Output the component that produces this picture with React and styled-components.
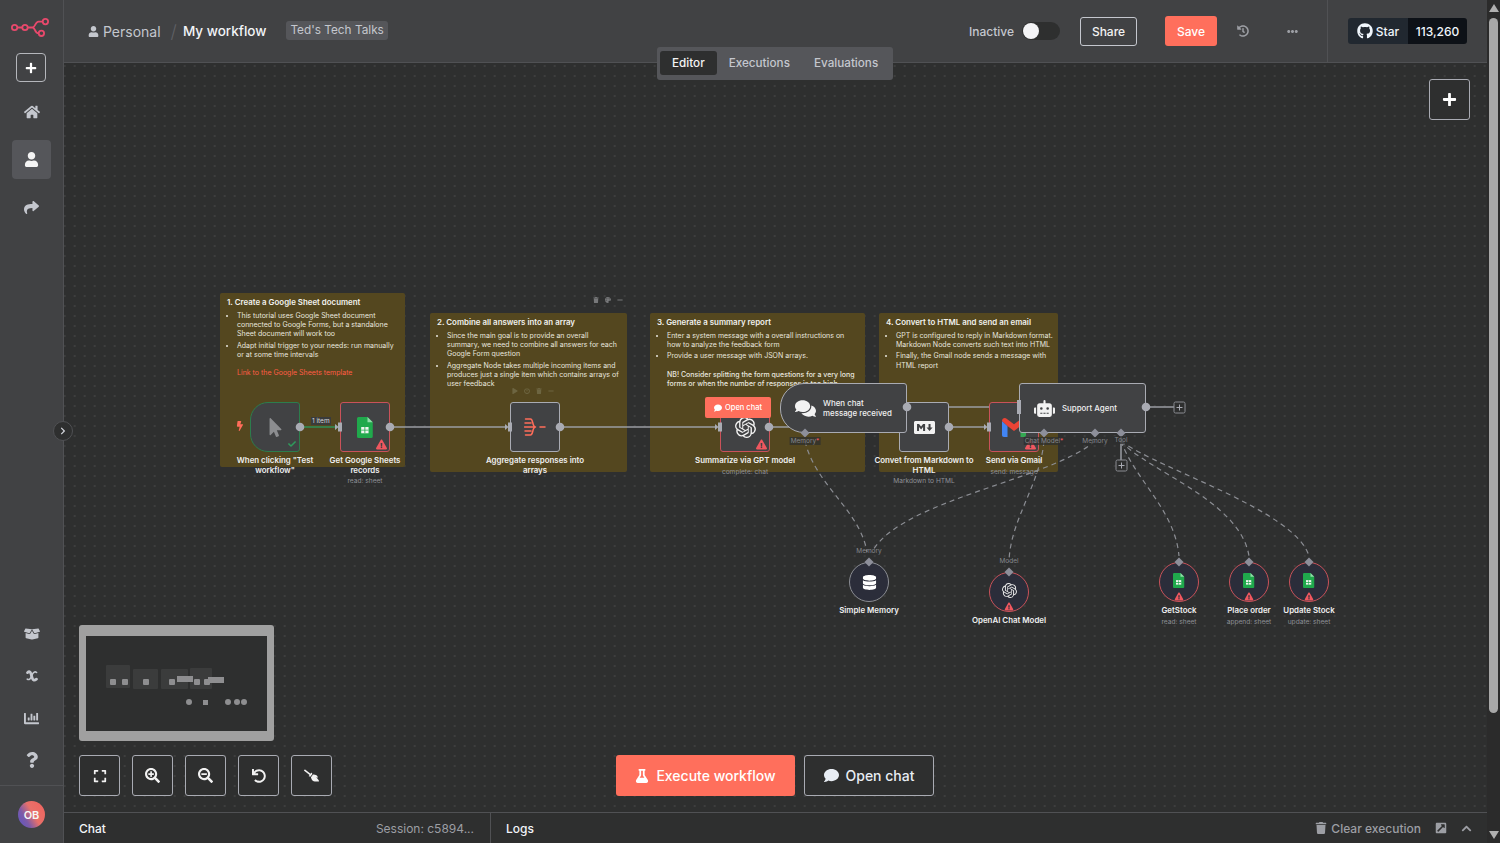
import styled, { createGlobalStyle } from "styled-components";
import {
  FaHome,
  FaUser,
  FaShare,
  FaBoxOpen,
  FaChartBar,
  FaQuestion,
  FaPlus,
  FaGithub,
  FaHistory,
  FaEllipsisH,
  FaExpand,
  FaSearchPlus,
  FaSearchMinus,
  FaUndo,
  FaBroom,
  FaFlask,
  FaComment,
  FaComments,
  FaTrash,
  FaExternalLinkSquareAlt,
  FaChevronUp,
  FaChevronRight,
  FaRobot,
  FaDatabase,
  FaMousePointer,
  FaBolt,
  FaCheck,
  FaExclamationTriangle,
  FaMarkdown,
  FaPalette,
  FaPlay,
  FaPowerOff,
  FaMinus,
} from "react-icons/fa";
import { SiOpenai } from "react-icons/si";

const GlobalStyle = createGlobalStyle`
  html, body {
    margin: 0;
    padding: 0;
    height: 100%;
    overflow: hidden;
    background: #2e2f2f;
    font-family: Inter, "Noto Sans", sans-serif;
  }
  * { box-sizing: border-box; }
`;

const Logo = () => (
  <svg width="40" height="20" viewBox="0 0 40 20" fill="none" stroke="#e8496c" strokeWidth="1.8">
    <circle cx="4.6" cy="10.5" r="2.7" />
    <circle cx="15" cy="10.5" r="2.7" />
    <circle cx="35.4" cy="4.6" r="2.7" />
    <circle cx="31.4" cy="16.3" r="2.7" />
    <path d="M7.3 10.5h5M17.7 10.5h4.8c3 0 2.6-5.9 6-5.9h4.2M22.5 10.5c3 0 1.7 5.8 6.2 5.8" />
  </svg>
);

const VariableIcon = () => (
  <svg width="12" height="14" viewBox="0 0 14 15" fill="none" stroke="currentColor" strokeLinecap="round">
    <path d="M1.8 3.6C3.600 1.600 5 2.200 5.800 5l1.500 5c.8 2.600 2.500 3 4.900 1.200" strokeWidth="3.2" />
    <path d="M12.400 3.400c-1.600-1.300-3.200-.8-4.600 1.400L5.600 9.400c-1.200 2.300-2.600 2.800-4.200 1.800" strokeWidth="1.800" />
  </svg>
);

const SheetIcon = ({ size = 21 }) => (
  <svg width={size * 0.75} height={size} viewBox="0 0 15 20">
    <path d="M1.5 0H10l5 5v13.5a1.500 1.500 0 0 1-1.500 1.500h-12A1.500 1.500 0 0 1 0 18.500v-17A1.500 1.500 0 0 1 1.500 0z" fill="#20a94c" />
    <path d="M10 0l5 5h-5z" fill="#8fdca8" />
    <path d="M4 9.500h7v6H4z" fill="#eef5ef" />
    <path d="M7.100 9.500h.8v6h-.8zM4 12.100h7v.8H4z" fill="#20a94c" />
  </svg>
);

const GmailIcon = () => (
  <svg width="24" height="19" viewBox="0 0 24 19">
    <path d="M0 3v14c0 1 .7 2 2 2h3.500V8z" fill="#4285f4" />
    <path d="M0 3c0-2.500 2.700-3.700 4.600-2.300L12 6.300l7.400-5.600C21.300-.7 24 .5 24 3l-5.500 5L12 13 5.500 8 0 3z" fill="#ea4335" />
    <path d="M18.500 19V8L24 3v14c0 1-.7 2-2 2z" fill="#34a853" />
  </svg>
);

const AggregateIcon = () => (
  <svg width="22" height="20" viewBox="0 0 22 20" fill="none" stroke="#ff6d5a" strokeWidth="1.5" strokeLinecap="round">
    <path d="M1.500 2h5c3 0 1.500 8 5 8M1 6h6M0.500 10h11M1 14h6M1.500 18h5c3 0 1.500-8 5-8M16 10h5" />
  </svg>
);

const Warning = () => (
  <WarnMark>
    <FaExclamationTriangle />
  </WarnMark>
);

const edges = [
  "M390 427H506",
  "M560 427H716",
  "M769 427H790",
  "M907 407H1019",
  "M949 427H985",
  "M1146 407H1174",
  "M1121 433V460",
];

const dashed = [
  "M805 441C815 485 860 510 867 552",
  "M1095 441C1050 480 900 500 872 552",
  "M1044 441C1040 485 1010 520 1009 562",
  "M1121 441C1135 480 1175 510 1179 556",
  "M1121 441C1145 470 1240 500 1249 556",
  "M1121 441C1160 470 1295 510 1309 556",
];

const inputs = [
  [340, 427],
  [510, 427],
  [720, 427],
  [989, 427],
];

const outputs = [
  [300, 427],
  [390, 427],
  [560, 427],
  [769, 427],
  [907, 407],
  [949, 427],
  [1146, 407],
];

const diamonds = [
  [805, 433],
  [1044, 433],
  [1095, 433],
  [1121, 433],
  [869, 562],
  [1009, 572],
  [1179, 562],
  [1249, 562],
  [1309, 562],
];

const circles = [
  { x: 869, y: 582, title: "Simple Memory", icon: <FaDatabase size={15} color="#fff" /> },
  { x: 1009, y: 592, title: "OpenAI Chat Model", icon: <SiOpenai size={15} color="#e8e8e8" />, warn: true },
  { x: 1179, y: 582, title: "GetStock", sub: "read: sheet", icon: <SheetIcon size={15} />, warn: true },
  { x: 1249, y: 582, title: "Place order", sub: "append: sheet", icon: <SheetIcon size={15} />, warn: true },
  { x: 1309, y: 582, title: "Update Stock", sub: "update: sheet", icon: <SheetIcon size={15} />, warn: true },
];

export default function App() {
  return (
    <>
      <GlobalStyle />
      <Page>
        <Sidebar>
          <SideGroup>
            <LogoSlot>
              <Logo />
            </LogoSlot>
            <AddButton>
              <FaPlus size={12} />
            </AddButton>
            <NavList>
              <NavItem>
                <FaHome size={16} />
              </NavItem>
              <NavItem $active>
                <FaUser size={15} />
              </NavItem>
              <NavItem>
                <FaShare size={15} />
              </NavItem>
            </NavList>
          </SideGroup>
          <SideGroup>
            <BottomNav>
              <SmallNav>
                <FaBoxOpen size={16} />
              </SmallNav>
              <SmallNav>
                <VariableIcon />
              </SmallNav>
              <SmallNav>
                <FaChartBar size={15} />
              </SmallNav>
              <SmallNav>
                <FaQuestion size={16} />
              </SmallNav>
            </BottomNav>
            <AvatarRow>
              <Avatar>OB</Avatar>
            </AvatarRow>
          </SideGroup>
        </Sidebar>

        <Main>
          <Header>
            <Crumbs>
              <FaUser size={11} />
              <CrumbProject>Personal</CrumbProject>
              <CrumbSlash>/</CrumbSlash>
              <CrumbName>My workflow</CrumbName>
              <Tag>Ted's Tech Talks</Tag>
            </Crumbs>
            <HeaderRight>
              <ActiveLabel>Inactive</ActiveLabel>
              <Toggle>
                <ToggleKnob />
              </Toggle>
              <ShareButton>Share</ShareButton>
              <SaveButton>Save</SaveButton>
              <HeadIcon $w={32}>
                <FaHistory size={12} />
              </HeadIcon>
              <HeadIcon $w={78} $pad={29}>
                <FaEllipsisH size={11} />
              </HeadIcon>
            </HeaderRight>
            <GithubBox>
              <StarPart>
                <FaGithub size={16} />
                Star
              </StarPart>
              <CountPart>113,260</CountPart>
            </GithubBox>
          </Header>

          <Tabs>
            <TabItem $active>Editor</TabItem>
            <TabItem>Executions</TabItem>
            <TabItem>Evaluations</TabItem>
          </Tabs>

          <CollapseButton>
            <FaChevronRight size={8} />
          </CollapseButton>

          <Canvas>
            <Layer>
              <Note $x={220} $y={293} $w={185} $h={174}>
                <NoteTitle>1. Create a Google Sheet document</NoteTitle>
                <NoteList>
                  <li>This tutorial uses Google Sheet document connected to Google Forms, but a standalone Sheet document will work too</li>
                  <li>Adapt initial trigger to your needs: run manually or at some time intervals</li>
                </NoteList>
                <NoteLink>Link to the Google Sheets template</NoteLink>
              </Note>
              <Note $x={430} $y={313} $w={197} $h={159}>
                <NoteTitle>2. Combine all answers into an array</NoteTitle>
                <NoteList>
                  <li>Since the main goal is to provide an overall summary, we need to combine all answers for each Google Form question</li>
                  <li>Aggregate Node takes multiple incoming items and produces just a single item which contains arrays of user feedback</li>
                </NoteList>
              </Note>
              <Note $x={650} $y={313} $w={215} $h={159}>
                <NoteTitle>3. Generate a summary report</NoteTitle>
                <NoteList>
                  <li>Enter a system message with a overall instructions on how to analyze the feedback form</li>
                  <li>Provide a user message with JSON arrays.</li>
                </NoteList>
                <NoteStrong>NB! Consider splitting the form questions for a very long forms or when the number of responses is too high</NoteStrong>
              </Note>
              <Note $x={879} $y={313} $w={179} $h={159}>
                <NoteTitle>4. Convert to HTML and send an email</NoteTitle>
                <NoteList>
                  <li>GPT is configured to reply in Markdown format. Markdown Node converts such text into HTML</li>
                  <li>Finally, the Gmail node sends a message with HTML report</li>
                </NoteList>
              </Note>

              <MiniToolbar $x={590} $y={294}>
                <FaTrash />
                <FaPalette />
                <FaMinus />
              </MiniToolbar>
              <MiniToolbar $x={509} $y={385} $faint>
                <FaPlay />
                <FaPowerOff />
                <FaTrash />
                <FaMinus />
              </MiniToolbar>

              <Wires viewBox="0 0 1500 843">
                <path d="M300 427H337" stroke="#2f8f57" strokeWidth="1.5" fill="none" />
                <path d="M335 424l3.500 3-3.500 3z" fill="#2f8f57" />
                {edges.map((d) => (
                  <path key={d} d={d} stroke="#9a9ca3" strokeWidth="1.5" fill="none" />
                ))}
                {dashed.map((d) => (
                  <path key={d} d={d} stroke="#8b8d93" strokeWidth="1.2" strokeDasharray="5 4" fill="none" />
                ))}
              </Wires>

              <ItemBadge>1 item</ItemBadge>

              <TriggerBolt>
                <FaBolt />
              </TriggerBolt>

              <Node $x={250} $y={402} $w={50} $h={50} $tone="success" $round="trigger">
                <FaMousePointer size={19} color="#8c8d90" />
                <CheckMark>
                  <FaCheck />
                </CheckMark>
                <Caption $w={100}>When clicking "Test workflow"</Caption>
              </Node>
              <Node $x={340} $y={402} $w={50} $h={50} $tone="error">
                <SheetIcon />
                <Warning />
                <Caption $w={90}>
                  Get Google Sheets records
                  <CaptionSub>read: sheet</CaptionSub>
                </Caption>
              </Node>
              <Node $x={510} $y={402} $w={50} $h={50}>
                <AggregateIcon />
                <Caption $w={110}>Aggregate responses into arrays</Caption>
              </Node>
              <Node $x={720} $y={402} $w={50} $h={50} $tone="error">
                <SiOpenai size={21} color="#f2f2f2" />
                <Warning />
                <Caption $w={120}>
                  Summarize via GPT model
                  <CaptionSub>complete: chat</CaptionSub>
                </Caption>
              </Node>
              <Node $x={899} $y={402} $w={50} $h={50}>
                <FaMarkdown size={21} color="#f2f2f2" />
                <Caption $w={110}>
                  Convet from Markdown to HTML
                  <CaptionSub>Markdown to HTML</CaptionSub>
                </Caption>
              </Node>
              <Node $x={989} $y={402} $w={50} $h={50} $tone="error">
                <GmailIcon />
                <Warning />
                <Caption $w={90}>
                  Send via Gmail
                  <CaptionSub>send: message</CaptionSub>
                </Caption>
              </Node>

              <OpenChatTag>
                <FaComment size={8} />
                Open chat
              </OpenChatTag>

              <Node $x={780} $y={383} $w={127} $h={50} $round="chat" $wide $top>
                <FaComments size={21} color="#f2f2f2" />
                <WideLabel>
                  When chat
                  <br />
                  message received
                </WideLabel>
              </Node>
              <Node $x={1019} $y={383} $w={127} $h={50} $wide $top>
                <FaRobot size={21} color="#f2f2f2" />
                <WideLabel>Support Agent</WideLabel>
              </Node>

              {circles.map((c) => (
                <Round key={c.title} $x={c.x} $y={c.y} $error={c.warn}>
                  {c.icon}
                  {c.warn && (
                    <RoundWarn>
                      <FaExclamationTriangle />
                    </RoundWarn>
                  )}
                  <Caption $w={100}>
                    {c.title}
                    {c.sub && <CaptionSub>{c.sub}</CaptionSub>}
                  </Caption>
                </Round>
              ))}

              <Handles viewBox="0 0 1500 843">
                {inputs.map(([x, y]) => (
                  <g key={x} fill="#a9abb3">
                    <path d={`M${x - 5} ${y - 3}l3.500 3-3.500 3z`} />
                    <rect x={x - 2} y={y - 4.5} width="4" height="9" />
                  </g>
                ))}
                <rect x="1017" y="400" width="4" height="14" fill="#a9abb3" />
                {outputs.map(([x, y]) => (
                  <circle key={x} cx={x} cy={y} r="4.3" fill="#a9abb3" />
                ))}
                {diamonds.map(([x, y]) => (
                  <path key={x} d={`M${x} ${y - 4.5}l4.500 4.500-4.500 4.500-4.500-4.500z`} fill="#8d8f9a" />
                ))}
                <rect x="1174" y="402" width="11" height="11" rx="1.5" fill="#2e2f2f" stroke="#8b8d93" />
                <path d="M1179.500 404.500v6M1176.500 407.500h6" stroke="#a9abb3" />
                <rect x="1116" y="460" width="11" height="11" rx="1.5" fill="#2e2f2f" stroke="#8b8d93" />
                <path d="M1121.500 462.500v6M1118.500 465.500h6" stroke="#a9abb3" />
              </Handles>

              <PortLabel $x={805} $y={441}>
                Memory<Star>*</Star>
              </PortLabel>
              <PortLabel $x={1044} $y={441}>
                Chat Model<Star>*</Star>
              </PortLabel>
              <PortLabel $x={1095} $y={441}>Memory</PortLabel>
              <PortLabel $x={1121} $y={440}>Tool</PortLabel>
              <PortLabel $x={869} $y={551} $plain>Memory</PortLabel>
              <PortLabel $x={1009} $y={561} $plain>Model</PortLabel>
            </Layer>

            <CanvasAdd>
              <FaPlus size={15} />
            </CanvasAdd>

            <Minimap>
              <svg width="181" height="95" viewBox="0 0 181 95">
                <g fill="#3b3c3c">
                  <rect x="20" y="29" width="24" height="23" rx="1" />
                  <rect x="47" y="33" width="25" height="20" rx="1" />
                  <rect x="75" y="33" width="27" height="20" rx="1" />
                  <rect x="104" y="32" width="22" height="21" rx="1" />
                </g>
                <g fill="#8e8e90">
                  <rect x="24" y="43" width="6" height="6" rx="1" />
                  <rect x="36" y="43" width="6" height="6" rx="1" />
                  <rect x="57" y="43" width="6" height="6" rx="1" />
                  <rect x="83" y="43" width="6" height="6" rx="1" />
                  <rect x="108" y="43" width="6" height="6" rx="1" />
                  <rect x="118" y="43" width="6" height="6" rx="1" />
                  <rect x="91" y="40" width="16" height="6" />
                  <rect x="122" y="41" width="16" height="6" />
                  <circle cx="103" cy="66" r="3" />
                  <rect x="117" y="64" width="5" height="5" />
                  <circle cx="142" cy="66" r="3" />
                  <circle cx="151" cy="66" r="3" />
                  <circle cx="158" cy="66" r="3" />
                </g>
              </svg>
            </Minimap>

            <Controls>
              <ControlButton>
                <FaExpand size={14} />
              </ControlButton>
              <ControlButton>
                <FaSearchPlus size={15} />
              </ControlButton>
              <ControlButton>
                <FaSearchMinus size={15} />
              </ControlButton>
              <ControlButton>
                <FaUndo size={14} />
              </ControlButton>
              <ControlButton $flip>
                <FaBroom size={15} />
              </ControlButton>
            </Controls>

            <RunActions>
              <ExecuteButton>
                <FaFlask size={14} />
                Execute workflow
              </ExecuteButton>
              <ChatButton>
                <FaComment size={15} />
                Open chat
              </ChatButton>
            </RunActions>
          </Canvas>

          <BottomBar>
            <ChatPane>
              <PaneTitle>Chat</PaneTitle>
              <SessionText>Session: c5894...</SessionText>
            </ChatPane>
            <LogsPane>
              <PaneTitle>Logs</PaneTitle>
              <BarTools>
                <ClearText>
                  <FaTrash size={12} />
                  Clear execution
                </ClearText>
                <FaExternalLinkSquareAlt size={12} />
                <FaChevronUp size={11} />
              </BarTools>
            </LogsPane>
          </BottomBar>
        </Main>

        <ScrollBar>
          <ArrowUp />
          <ScrollThumb />
          <ArrowDown />
        </ScrollBar>
      </Page>
    </>
  );
}

const Page = styled.div`
  display: flex;
  width: 1500px;
  height: 843px;
  overflow: hidden;
  background: #2e2f2f;
  color: #f2f2f2;
`;

const Sidebar = styled.aside`
  width: 64px;
  flex: none;
  display: flex;
  flex-direction: column;
  justify-content: space-between;
  background: #414244;
  border-right: 1px solid #505154;
  color: #c4c7ce;
`;

const SideGroup = styled.div`
  display: flex;
  flex-direction: column;
`;

const LogoSlot = styled.div`
  height: 53px;
  padding: 17px 0 0 10px;
`;

const AddButton = styled.button`
  width: 30px;
  height: 29px;
  margin-left: 16px;
  padding: 0;
  display: flex;
  align-items: center;
  justify-content: center;
  color: #fff;
  background: transparent;
  border: 1px solid #b5b7bc;
  border-radius: 4px;
`;

const NavList = styled.nav`
  display: flex;
  flex-direction: column;
  gap: 8.5px;
  margin-top: 10.5px;
`;

const NavItem = styled.div`
  width: 39px;
  height: 39px;
  margin-left: 12px;
  display: flex;
  align-items: center;
  justify-content: center;
  border-radius: 4px;
  color: ${(p) => (p.$active ? "#f4f4f4" : "#c4c7ce")};
  background: ${(p) => (p.$active ? "#55565a" : "transparent")};
`;

const BottomNav = styled.nav`
  display: flex;
  flex-direction: column;
  padding-bottom: 4px;
`;

const SmallNav = styled.div`
  height: 42px;
  display: flex;
  align-items: center;
  justify-content: center;
`;

const AvatarRow = styled.div`
  height: 58px;
  display: flex;
  align-items: center;
  justify-content: center;
  border-top: 1px solid #505154;
`;

const Avatar = styled.div`
  width: 27px;
  height: 27px;
  display: flex;
  align-items: center;
  justify-content: center;
  border-radius: 50%;
  font-size: 11px;
  font-weight: 600;
  color: #f6f6f6;
  background: linear-gradient(60deg, #5a55c7 0%, #7c5aa8 30%, #e8706a 55%, #f0635d 100%);
`;

const Main = styled.main`
  position: relative;
  flex: 1;
  min-width: 0;
  display: flex;
  flex-direction: column;
`;

const Header = styled.header`
  height: 63px;
  flex: none;
  display: flex;
  align-items: center;
  padding-left: 24px;
  background: #414244;
  border-bottom: 1px solid #505154;
`;

const Crumbs = styled.div`
  display: flex;
  align-items: center;
  color: #c4c7ce;
`;

const CrumbProject = styled.span`
  margin-left: 4px;
  font-size: 14px;
  color: #c4c7ce;
`;

const CrumbSlash = styled.span`
  margin: 0 6px 0 10px;
  font-size: 18px;
  font-weight: 300;
  color: #5f6064;
`;

const CrumbName = styled.span`
  font-size: 13.5px;
  font-weight: 500;
  color: #f2f4f8;
`;

const Tag = styled.span`
  margin: -1px 0 0 20px;
  padding: 3px 4px;
  height: 19px;
  font-size: 11.8px;
  line-height: 13px;
  color: #c4c7ce;
  background: #55565a;
  border-radius: 3px;
`;

const HeaderRight = styled.div`
  margin-left: auto;
  display: flex;
  align-items: center;
`;

const ActiveLabel = styled.span`
  font-size: 12px;
  font-weight: 500;
  color: #c4c7ce;
`;

const Toggle = styled.div`
  width: 38px;
  height: 18px;
  margin: 0 20px 0 8px;
  padding: 0 0 0 1px;
  display: flex;
  align-items: center;
  background: #2e2f2f;
  border-radius: 9px;
`;

const ToggleKnob = styled.span`
  width: 16px;
  height: 16px;
  border-radius: 50%;
  background: #f4f4f6;
`;

const ShareButton = styled.button`
  width: 57px;
  height: 29px;
  margin-right: 28px;
  padding: 0;
  font: 500 12px Inter, sans-serif;
  color: #f2f2f2;
  background: #414244;
  border: 1px solid #c4c7ce;
  border-radius: 3px;
`;

const SaveButton = styled.button`
  width: 52px;
  height: 30px;
  padding: 0;
  font: 500 12px Inter, sans-serif;
  color: #fff;
  background: #ff6f5c;
  border: none;
  border-radius: 3px;
`;

const HeadIcon = styled.div`
  width: ${(p) => p.$w}px;
  display: flex;
  justify-content: flex-end;
  padding-right: ${(p) => p.$pad || 0}px;
  color: #9c9ea4;
`;

const GithubBox = styled.div`
  width: 160px;
  height: 62px;
  flex: none;
  display: flex;
  align-items: center;
  padding-left: 20px;
  border-left: 1px solid #505154;
`;

const StarPart = styled.div`
  width: 60px;
  height: 26px;
  display: flex;
  align-items: center;
  justify-content: center;
  gap: 3px;
  font-size: 12px;
  font-weight: 500;
  color: #f0f6fc;
  background: #212830;
  border-radius: 3px 0 0 3px;
`;

const CountPart = styled.div`
  width: 59px;
  height: 26px;
  display: flex;
  align-items: center;
  justify-content: center;
  font-size: 12px;
  font-weight: 500;
  color: #f0f6fc;
  background: #0d1117;
  border-radius: 0 3px 3px 0;
`;

const Tabs = styled.div`
  position: absolute;
  top: 47px;
  left: 593px;
  z-index: 20;
  display: flex;
  height: 33px;
  width: 236px;
  padding: 4px 3px;
  background: #55565a;
  border-radius: 3px;
`;

const TabItem = styled.div`
  height: 24px;
  padding: 0 12px;
  display: flex;
  align-items: center;
  font-size: 11.7px;
  font-weight: 500;
  color: ${(p) => (p.$active ? "#f4f4f4" : "#c4c7ce")};
  background: ${(p) => (p.$active ? "#2e2f2f" : "transparent")};
  border-radius: 3px;
`;

const CollapseButton = styled.div`
  position: absolute;
  left: -11px;
  top: 421px;
  z-index: 10;
  width: 20px;
  height: 20px;
  display: flex;
  align-items: center;
  justify-content: center;
  color: #d4d6dc;
  background: #2e2f2f;
  border: 1px solid #505154;
  border-radius: 50%;
`;

const Canvas = styled.section`
  position: relative;
  flex: 1;
  overflow: hidden;
  background-color: #2e2f2f;
  background-image: radial-gradient(circle, #4e4f50 0.6px, transparent 0.8px);
  background-size: 10px 10px;
  background-position: 5.7px -2px;
`;

const Layer = styled.div`
  position: absolute;
  left: -64px;
  top: -63px;
  width: 1500px;
  height: 843px;
`;

const Note = styled.div`
  position: absolute;
  left: ${(p) => p.$x}px;
  top: ${(p) => p.$y}px;
  width: ${(p) => p.$w}px;
  height: ${(p) => p.$h}px;
  padding: 4px 5px 4px 7px;
  overflow: hidden;
  font-size: 7px;
  line-height: 9.2px;
  color: #e8e6df;
  background: #54471f;
  border-radius: 2px;
`;

const NoteTitle = styled.div`
  font-size: 7.9px;
  line-height: 10px;
  font-weight: 600;
  color: #f2f2ee;
`;

const NoteList = styled.ul`
  margin: 4px 0 0;
  padding: 0 0 0 10px;
  & > li {
    margin-bottom: 2px;
  }
`;

const NoteLink = styled.div`
  margin: 9px 0 0 10px;
  color: #ff5c45;
`;

const NoteStrong = styled.div`
  margin: 9px 0 0 10px;
  font-weight: 500;
`;

const MiniToolbar = styled.div`
  position: absolute;
  left: ${(p) => p.$x}px;
  top: ${(p) => p.$y}px;
  display: flex;
  align-items: center;
  gap: 6px;
  height: 12px;
  padding: 0 3px;
  font-size: 6px;
  color: ${(p) => (p.$faint ? "#6d6541" : "#77787a")};
`;

const Wires = styled.svg`
  position: absolute;
  left: 0;
  top: 0;
  width: 1500px;
  height: 843px;
  z-index: 1;
`;

const Handles = styled.svg`
  position: absolute;
  left: 0;
  top: 0;
  width: 1500px;
  height: 843px;
  z-index: 6;
  pointer-events: none;
`;

const ItemBadge = styled.span`
  position: absolute;
  left: 311px;
  top: 417px;
  z-index: 3;
  padding: 0 1px;
  font-size: 6.5px;
  line-height: 8px;
  color: #d8d8d8;
  background: #3a3b3b;
`;

const TriggerBolt = styled.span`
  position: absolute;
  left: 235px;
  top: 421px;
  z-index: 3;
  font-size: 10px;
  color: #ff6d5a;
`;

const nodeBorder = { success: "#2c7d4d", error: "#c9525a" };

const Node = styled.div`
  position: absolute;
  left: ${(p) => p.$x}px;
  top: ${(p) => p.$y}px;
  width: ${(p) => p.$w}px;
  height: ${(p) => p.$h}px;
  z-index: ${(p) => (p.$top ? 4 : 2)};
  display: flex;
  align-items: center;
  justify-content: ${(p) => (p.$wide ? "flex-start" : "center")};
  padding-left: ${(p) => (p.$wide ? "14px" : "0")};
  gap: 7px;
  background: #414244;
  border: 1.5px solid ${(p) => nodeBorder[p.$tone] || "#a9abb3"};
  border-radius: ${(p) =>
    p.$round === "trigger" ? "18px 3px 3px 18px" : p.$round === "chat" ? "24px 3px 3px 24px" : "3px"};
`;

const Caption = styled.div`
  position: absolute;
  top: calc(100% + 5px);
  left: 50%;
  width: ${(p) => p.$w}px;
  transform: translateX(-50%);
  text-align: center;
  font-size: 7.9px;
  line-height: 9.5px;
  font-weight: 600;
  color: #f0f0f0;
`;

const CaptionSub = styled.div`
  margin-top: 2px;
  font-size: 6.6px;
  line-height: 8px;
  font-weight: 400;
  color: #8f9197;
`;

const WarnMark = styled.span`
  position: absolute;
  right: 2px;
  bottom: 1px;
  display: flex;
  font-size: 11px;
  color: #f0575f;
`;

const CheckMark = styled.span`
  position: absolute;
  right: 3px;
  bottom: 3px;
  display: flex;
  font-size: 8px;
  color: #2f9a5c;
`;

const WideLabel = styled.div`
  font-size: 7.9px;
  line-height: 10px;
  font-weight: 500;
  color: #f0f0f0;
`;

const OpenChatTag = styled.div`
  position: absolute;
  left: 705px;
  top: 397px;
  z-index: 3;
  width: 66px;
  height: 21px;
  display: flex;
  align-items: center;
  justify-content: center;
  gap: 3px;
  font-size: 7.5px;
  font-weight: 500;
  color: #fff;
  background: #ff6f5c;
  border-radius: 2px;
`;

const Round = styled.div`
  position: absolute;
  left: ${(p) => p.$x - 20}px;
  top: ${(p) => p.$y - 20}px;
  z-index: 2;
  width: 40px;
  height: 40px;
  padding-bottom: ${(p) => (p.$error ? "4px" : "0")};
  display: flex;
  align-items: center;
  justify-content: center;
  background: #2b2d3a;
  border: 1.3px solid ${(p) => (p.$error ? "#c9525a" : "#8b8d93")};
  border-radius: 50%;
`;

const RoundWarn = styled.span`
  position: absolute;
  left: 50%;
  bottom: 0;
  transform: translateX(-50%);
  display: flex;
  font-size: 9px;
  color: #f0575f;
`;

const PortLabel = styled.span`
  position: absolute;
  left: ${(p) => p.$x}px;
  top: ${(p) => p.$y - 4}px;
  z-index: 7;
  transform: translateX(-50%);
  padding: 0 1px;
  font-size: 6.5px;
  line-height: 8px;
  white-space: nowrap;
  color: #85878d;
  background: ${(p) => (p.$plain ? "transparent" : "rgba(46, 47, 47, 0.75)")};
`;

const Star = styled.span`
  color: #f0575f;
`;

const CanvasAdd = styled.button`
  position: absolute;
  top: 16px;
  right: 17px;
  width: 41px;
  height: 41px;
  padding: 0;
  display: flex;
  align-items: center;
  justify-content: center;
  color: #fff;
  background: #2e2f2f;
  border: 1px solid #a9abb3;
  border-radius: 3px;
`;

const Minimap = styled.div`
  position: absolute;
  left: 15px;
  top: 562px;
  width: 195px;
  height: 116px;
  background: #2e2f2f;
  border-style: solid;
  border-color: #a0a0a0;
  border-width: 11px 7px 10px;
  border-radius: 3px;
  & > svg {
    display: block;
  }
`;

const Controls = styled.div`
  position: absolute;
  left: 15px;
  bottom: 16px;
  display: flex;
  gap: 12px;
`;

const ControlButton = styled.button`
  width: 41px;
  height: 41px;
  padding: 0;
  display: flex;
  align-items: center;
  justify-content: center;
  color: #f2f2f2;
  background: #2e2f2f;
  border: 1px solid #a9abb3;
  border-radius: 3px;
  & > svg {
    transform: ${(p) => (p.$flip ? "scaleX(-1)" : "none")};
  }
`;

const RunActions = styled.div`
  position: absolute;
  left: 552px;
  bottom: 16px;
  display: flex;
  gap: 9px;
`;

const ExecuteButton = styled.button`
  width: 179px;
  height: 41px;
  padding: 0;
  display: flex;
  align-items: center;
  justify-content: center;
  gap: 7px;
  font: 500 14px Inter, sans-serif;
  color: #fff;
  background: #ff6f5c;
  border: none;
  border-radius: 3px;
`;

const ChatButton = styled.button`
  width: 130px;
  height: 41px;
  padding: 0;
  display: flex;
  align-items: center;
  justify-content: center;
  gap: 7px;
  font: 500 14px Inter, sans-serif;
  color: #e8edf4;
  background: #2e2f2f;
  border: 1px solid #a9abb3;
  border-radius: 3px;
`;

const BottomBar = styled.footer`
  height: 31px;
  flex: none;
  display: flex;
  background: #2e2f2f;
  border-top: 1px solid #505154;
  font-size: 12px;
`;

const ChatPane = styled.div`
  width: 427px;
  flex: none;
  display: flex;
  align-items: center;
  justify-content: space-between;
  padding: 0 16px 0 15px;
  border-right: 1px solid #505154;
`;

const PaneTitle = styled.span`
  font-size: 12px;
  font-weight: 500;
  color: #f2f4f8;
`;

const SessionText = styled.span`
  font-size: 12px;
  color: #9c9ea4;
`;

const LogsPane = styled.div`
  flex: 1;
  display: flex;
  align-items: center;
  justify-content: space-between;
  padding: 0 15px;
`;

const BarTools = styled.div`
  display: flex;
  align-items: center;
  gap: 14px;
  color: #9c9ea4;
`;

const ClearText = styled.span`
  display: flex;
  align-items: center;
  gap: 4px;
  font-size: 12px;
  font-weight: 500;
`;

const ScrollBar = styled.div`
  width: 13px;
  flex: none;
  display: flex;
  flex-direction: column;
  align-items: center;
  background: #2b2b2b;
`;

const ArrowUp = styled.span`
  margin-top: 4px;
  border-left: 5px solid transparent;
  border-right: 5px solid transparent;
  border-bottom: 8px solid #b0b0b0;
`;

const ArrowDown = styled.span`
  margin-top: auto;
  margin-bottom: 4px;
  border-left: 5px solid transparent;
  border-right: 5px solid transparent;
  border-top: 8px solid #b0b0b0;
`;

const ScrollThumb = styled.span`
  width: 9px;
  height: 695px;
  margin-top: 6px;
  background: #a8a8a8;
  border-radius: 5px;
`;
